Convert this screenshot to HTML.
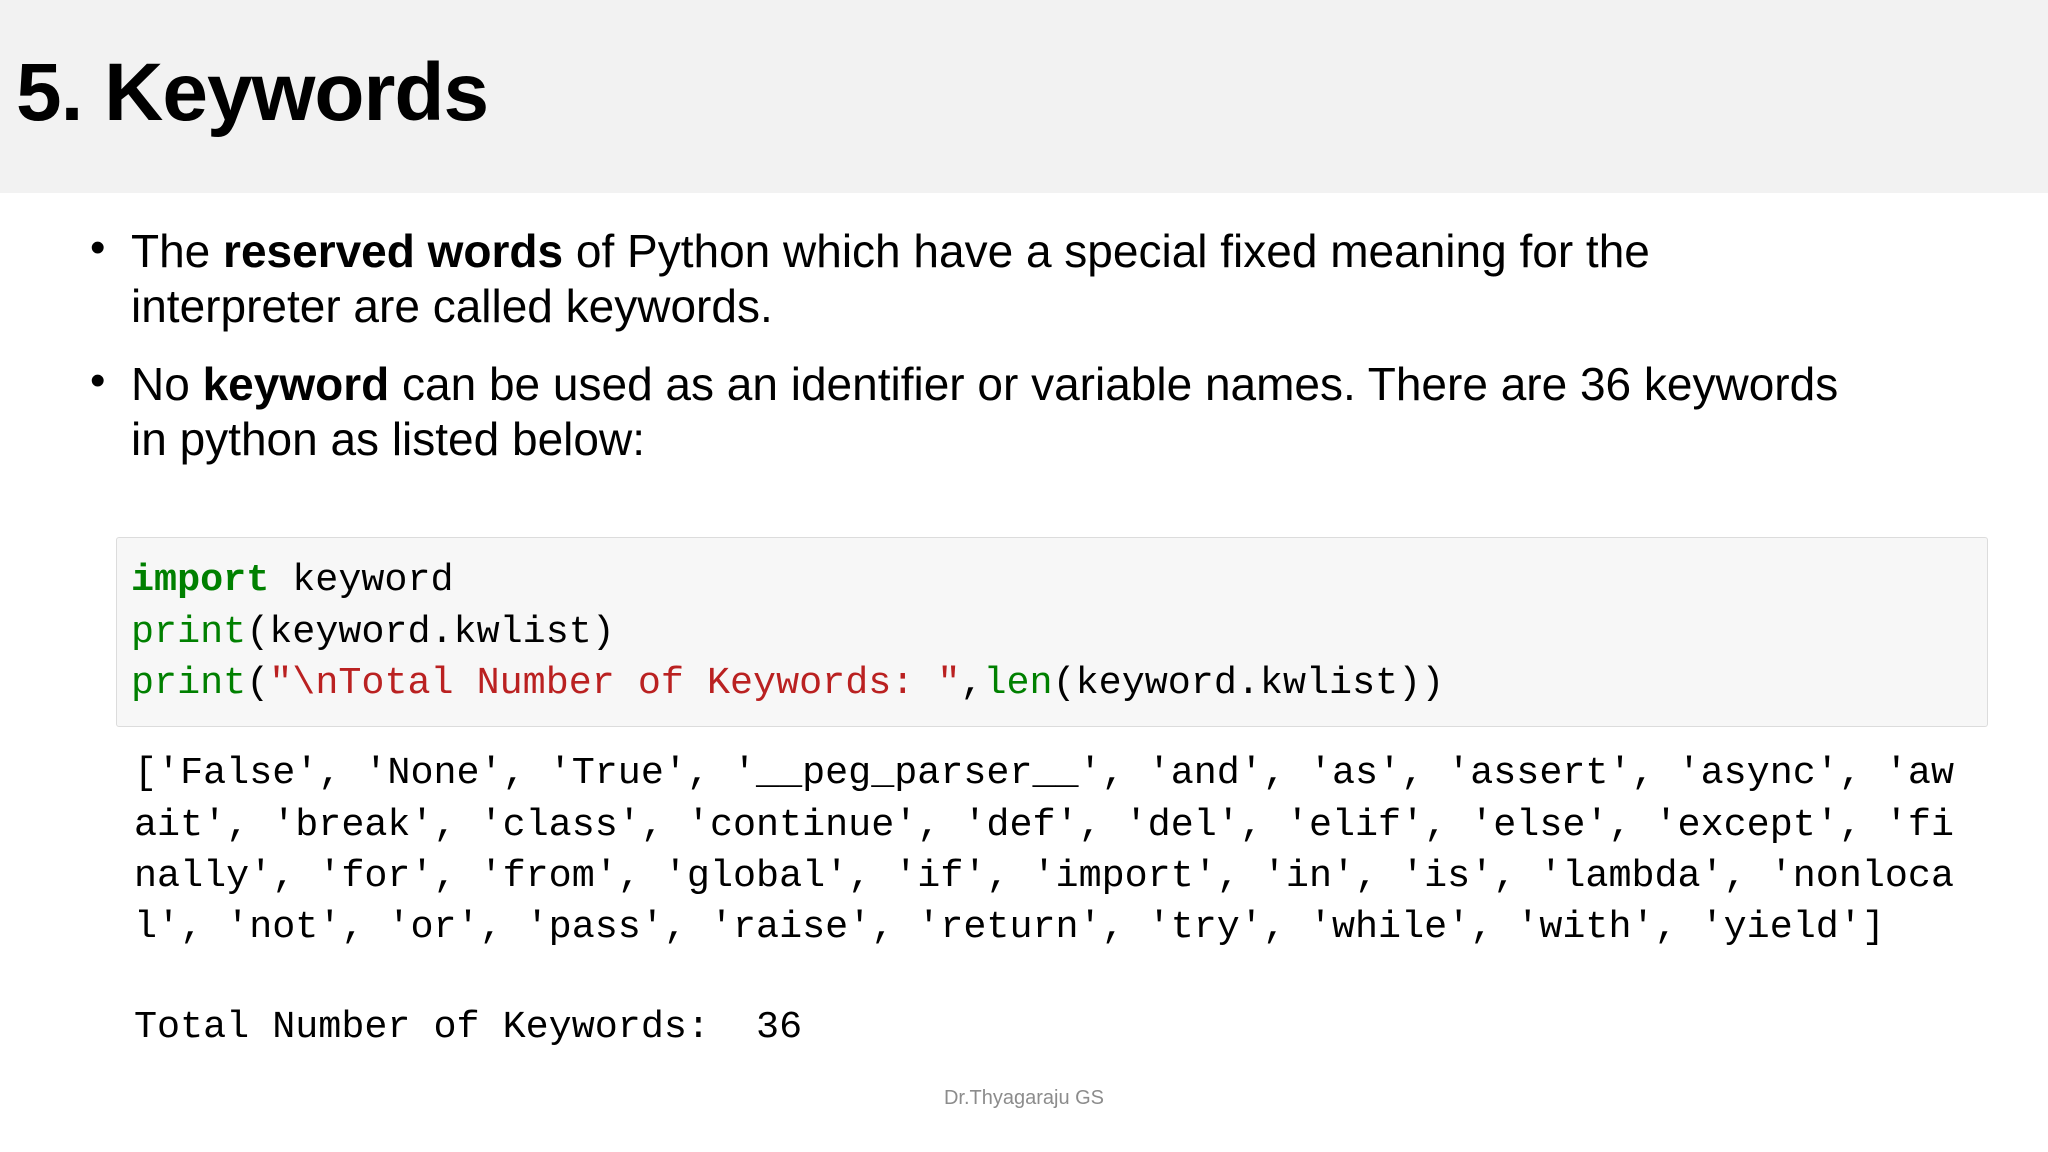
<!DOCTYPE html>
<html><head><meta charset="utf-8"><style>
body{margin:0;width:2048px;height:1152px;background:#fff;position:relative;overflow:hidden;font-family:"Liberation Sans",sans-serif;color:#000}
.hdr{position:absolute;left:0;top:0;width:2048px;height:193px;background:#f2f2f2}
.t{position:absolute;white-space:pre;line-height:1}
.title{left:16px;top:52px;font-size:82px;font-weight:bold;letter-spacing:-1px}
.b{font-size:46px;left:131px}
.dot{font-size:44px;left:90px}
.box{position:absolute;left:116px;top:537px;width:1870px;height:188px;background:#f7f7f7;border:1.5px solid #dcdcdc;border-radius:3px}
.m{font-family:"Liberation Mono",monospace;font-size:38.4px}
.g{color:#008000}.r{color:#ba2121}
</style></head><body>
<div class="hdr"></div>
<div class="t title">5. Keywords</div>
<div class="t dot" style="top:226px">•</div>
<div class="t b" style="top:228px">The <b>reserved words</b> of Python which have a special fixed meaning for the</div>
<div class="t b" style="top:283px">interpreter are called keywords.</div>
<div class="t dot" style="top:359px">•</div>
<div class="t b" style="top:361px">No <b>keyword</b> can be used as an identifier or variable names. There are 36 keywords</div>
<div class="t b" style="top:416px">in python as listed below:</div>
<div class="box"></div>
<div class="t m" style="left:131px;top:561px"><b class="g">import</b> keyword</div>
<div class="t m" style="left:131px;top:613px"><span class="g">print</span>(keyword.kwlist)</div>
<div class="t m" style="left:131px;top:664px"><span class="g">print</span>(<span class="r">"\nTotal Number of Keywords: "</span>,<span class="g">len</span>(keyword.kwlist))</div>
<div class="t m" style="left:134px;top:754px">['False', 'None', 'True', '__peg_parser__', 'and', 'as', 'assert', 'async', 'aw</div>
<div class="t m" style="left:134px;top:806px">ait', 'break', 'class', 'continue', 'def', 'del', 'elif', 'else', 'except', 'fi</div>
<div class="t m" style="left:134px;top:857px">nally', 'for', 'from', 'global', 'if', 'import', 'in', 'is', 'lambda', 'nonloca</div>
<div class="t m" style="left:134px;top:908px">l', 'not', 'or', 'pass', 'raise', 'return', 'try', 'while', 'with', 'yield']</div>
<div class="t m" style="left:134px;top:1008px">Total Number of Keywords:  36</div>
<div class="t" style="left:0;width:2048px;text-align:center;top:1088px;font-size:20px;color:#8c8c8c">Dr.Thyagaraju GS</div>
</body></html>
